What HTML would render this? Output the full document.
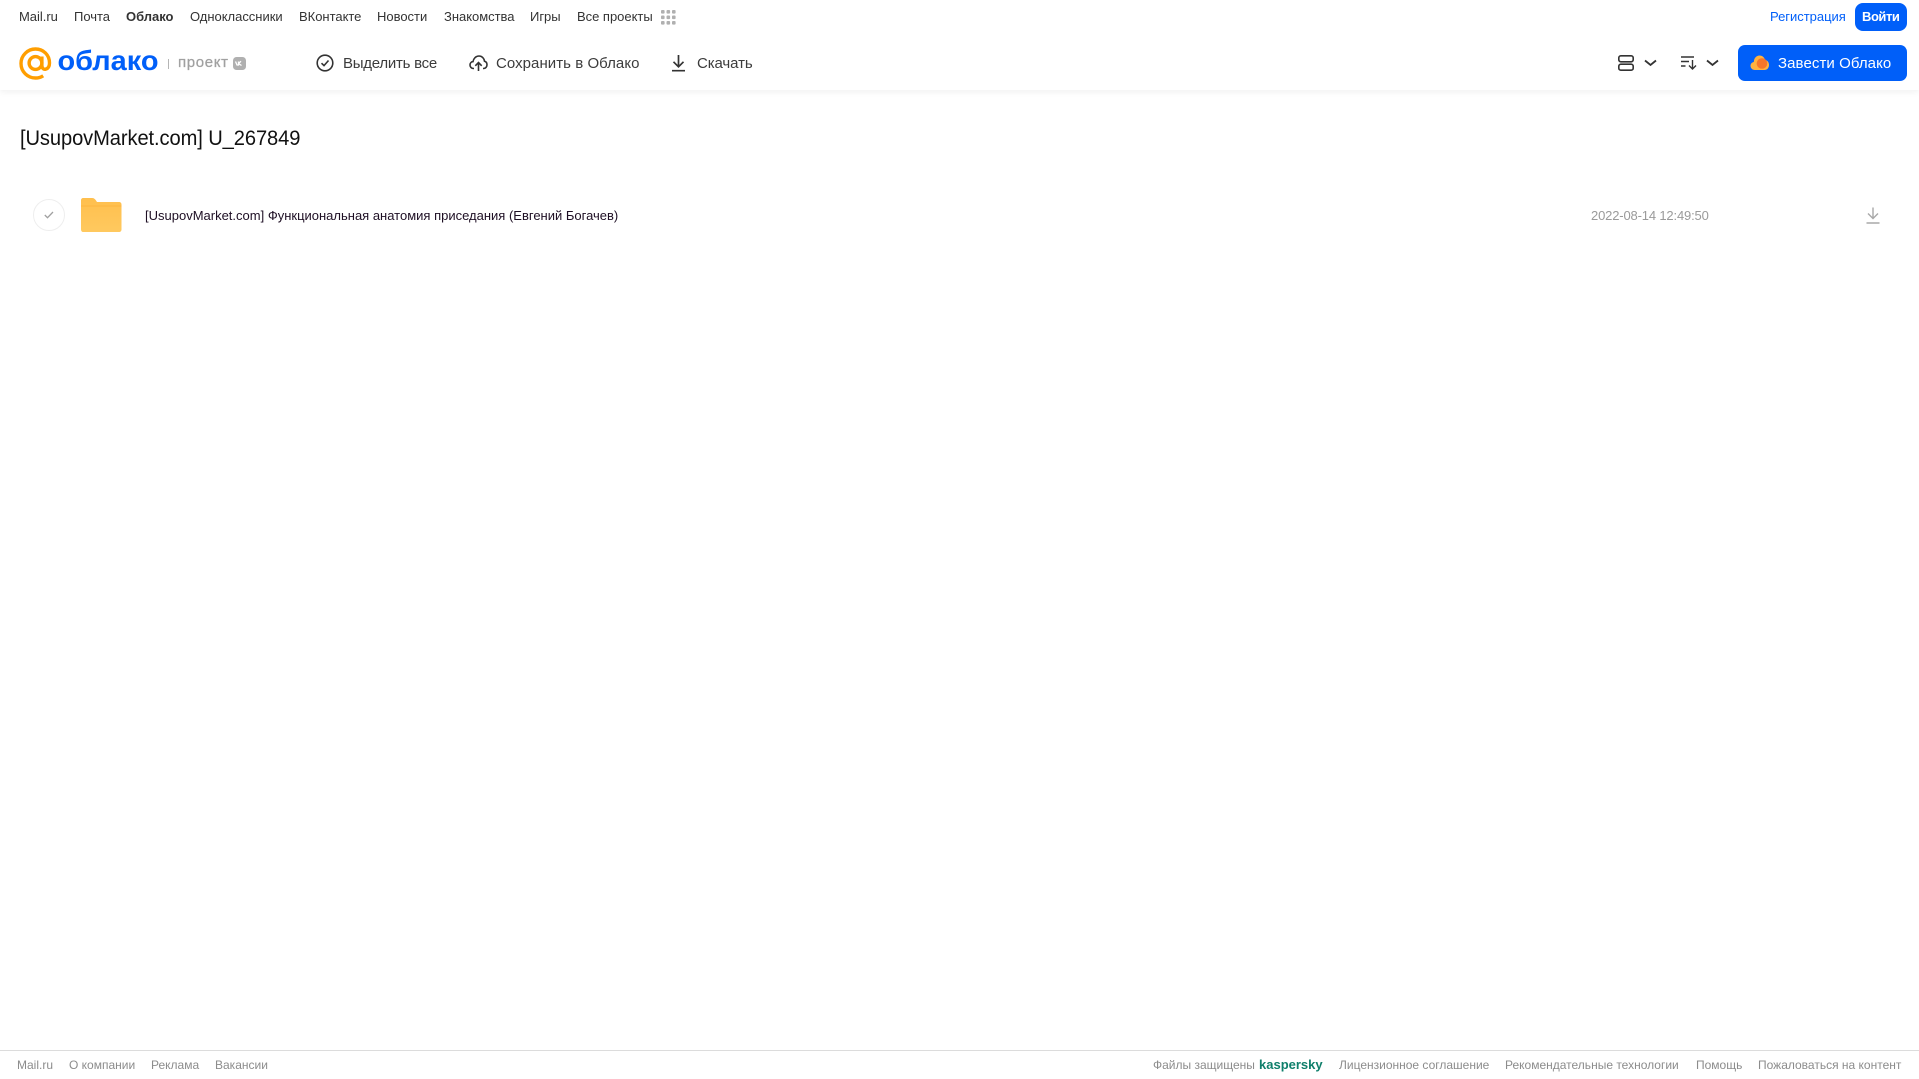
<!DOCTYPE html>
<html lang="ru"><head><meta charset="utf-8"><title>Облако</title>
<style>
html,body{margin:0;padding:0;background:#fff;width:1919px;height:1079px;overflow:hidden}
body{font-family:"Liberation Sans",sans-serif;position:relative}
.t{position:absolute;white-space:nowrap;line-height:20px}
.n{font-size:13px;color:#333;top:7px;letter-spacing:-.02px}
.a{font-size:15px;color:#3c3c3c;top:53.5px}
.f{font-size:12px;color:#8c8c8c;top:1055px}
svg{position:absolute;overflow:visible}
#hd{position:absolute;left:0;top:0;width:1919px;height:90px;background:#fff;box-shadow:0 2px 6px rgba(0,0,0,.06)}
</style></head><body>
<div id="hd"></div>
<span class="t n" style="left:19px">Mail.ru</span>
<span class="t n" style="left:74px">Почта</span>
<span class="t n" style="left:126px;font-weight:bold">Облако</span>
<span class="t n" style="left:190px">Одноклассники</span>
<span class="t n" style="left:299px">ВКонтакте</span>
<span class="t n" style="left:377px">Новости</span>
<span class="t n" style="left:444px">Знакомства</span>
<span class="t n" style="left:530px">Игры</span>
<span class="t n" style="left:577px">Все проекты</span>
<svg style="left:661px;top:10px" width="15" height="15" fill="#b0b0b0"><rect x="0" y="0" width="3.6" height="3.6" rx="1"/><rect x="5.5" y="0" width="3.6" height="3.6" rx="1"/><rect x="11" y="0" width="3.6" height="3.6" rx="1"/><rect x="0" y="5.5" width="3.6" height="3.6" rx="1"/><rect x="5.5" y="5.5" width="3.6" height="3.6" rx="1"/><rect x="11" y="5.5" width="3.6" height="3.6" rx="1"/><rect x="0" y="11" width="3.6" height="3.6" rx="1"/><rect x="5.5" y="11" width="3.6" height="3.6" rx="1"/><rect x="11" y="11" width="3.6" height="3.6" rx="1"/></svg>
<span class="t n" style="left:1770px;color:#005ff9">Регистрация</span>
<div style="position:absolute;left:1855px;top:3px;width:52px;height:28px;border-radius:8px;background:#005ff9"></div>
<span class="t n" style="left:1862px;color:#fff;font-weight:bold;letter-spacing:-.45px">Войти</span>

<svg style="left:19px;top:47px" width="33" height="33" viewBox="0 0 33 33" fill="none" stroke="#ff9e00" stroke-width="3.4"><circle cx="16.5" cy="16" r="6.4"/><path d="M22.900 9.500V18.500C22.900 21.600 25 22.600 26.600 22.200 29.400 21.500 30.500 19 30.500 16 30.500 7.800 24.300 2 16.500 2 8.800 2 2 8.300 2 16.500 2 24.700 8.500 31 16.500 31 19.500 31 22 30.200 24.200 28.800"/></svg>
<svg style="left:56px;top:42px" width="105" height="40"><text x="1.500" y="28" font-family="Liberation Sans" font-size="28" font-weight="bold" fill="#005ff9" textLength="101" lengthAdjust="spacingAndGlyphs">облако</text></svg>
<div style="position:absolute;left:168px;top:59px;width:1px;height:10px;background:#b5b5b5"></div>
<span class="t" style="left:178px;top:53px;font-size:15px;color:#a0a0a0;letter-spacing:.65px;-webkit-text-stroke:.25px #a0a0a0">проект</span>
<div style="position:absolute;left:233px;top:57px;width:13px;height:13px;border-radius:3.500px;background:#b0b0b0"></div>
<svg style="left:235px;top:60px" width="9" height="7" fill="none" stroke="#fff" stroke-width="1.300"><path d="M.5 1.500 2 5 3.500 5V1.500M3.500 3.500 6 1.300M3.500 3.500 6.500 5.500"/></svg>

<svg style="left:316px;top:54px" width="18" height="18" fill="none" stroke="#333" stroke-width="1.600"><circle cx="9" cy="9" r="7.800"/><path d="M5.500 9.200 8 11.600 12.500 6.500"/></svg>
<span class="t a" style="left:343px;letter-spacing:-.25px">Выделить все</span>
<svg style="left:469px;top:54px" width="19" height="18" fill="none" stroke="#333" stroke-width="1.600"><path d="M5 14.500H4.500C2.300 14.500 1 12.800 1 11 1 9.200 2.300 7.800 4 7.600 4.500 4.500 6.800 2 10 2 13 2 15.200 4.300 15.500 7.200 17 7.600 18 9 18 10.800 18 12.800 16.500 14.500 14.500 14.500H14M9.500 17V9M6.300 11.800 9.500 8.500 12.700 11.800"/></svg>
<span class="t a" style="left:496px;letter-spacing:.05px">Сохранить в Облако</span>
<svg style="left:671px;top:54px" width="15" height="18" fill="none" stroke="#333" stroke-width="1.700"><path d="M7.500 1V12.500M2.500 7.800 7.500 12.800 12.500 7.800M1 16.700H14"/></svg>
<span class="t a" style="left:697px;letter-spacing:-.1px">Скачать</span>

<svg style="left:1618px;top:55px" width="16" height="16" fill="none" stroke="#333" stroke-width="1.600"><rect x=".8" y=".8" width="14.400" height="6" rx="2"/><rect x=".8" y="9.200" width="14.400" height="6" rx="2"/></svg>
<svg style="left:1644px;top:59px" width="13" height="8" fill="none" stroke="#333" stroke-width="1.800"><path d="M1 1.500 6.500 6 12 1.500"/></svg>
<svg style="left:1681px;top:56px" width="16" height="14" fill="none" stroke="#333" stroke-width="1.400"><path d="M0 1H13M0 5.500H8M0 10H4.500M11.500 4V12.500M8 9.500 11.500 13 15 9.500"/></svg>
<svg style="left:1706px;top:59px" width="13" height="8" fill="none" stroke="#333" stroke-width="1.800"><path d="M1 1.500 6.500 6 12 1.500"/></svg>

<div style="position:absolute;left:1738px;top:45px;width:169px;height:36px;border-radius:7px;background:#005ff9"></div>
<svg style="left:1750px;top:54px" width="20" height="17"><path d="M5 16C2 16 .5 14 .5 11.800.5 9.800 2 8.300 3.800 8 4 4 6.500 1.500 9.500 1.500 12.500 1.500 14.500 3.500 15 6 17.500 6.300 19 8.300 19 11 19 14 17 16 14.500 16Z" fill="#ffb23f"/><circle cx="12" cy="9.500" r="5.300" fill="#f5762b"/></svg>
<span class="t a" style="left:1778px;color:#fff;letter-spacing:.08px">Завести Облако</span>

<span class="t" style="left:20px;top:127px;font-size:21px;line-height:24px;color:#111;letter-spacing:-.1px;transform:scaleX(.958);transform-origin:0 50%">[UsupovMarket.com] U_267849</span>

<div style="position:absolute;left:33px;top:199px;width:30px;height:30px;border:1px solid #eee;border-radius:50%"></div>
<svg style="left:44px;top:211px" width="10" height="8" fill="none" stroke="#a0a0a0" stroke-width="1.300"><path d="M.8 4 3.500 6.700 9 1"/></svg>
<svg style="left:81px;top:198px" width="41" height="34"><defs><linearGradient id="g" x1="0" y1="0" x2="0" y2="1"><stop offset="0" stop-color="#ffbf4d"/><stop offset="1" stop-color="#ffc95f"/></linearGradient></defs><path d="M2 0H11C13 0 14 1 15 2.500L16 4H38C39.500 4 40.500 5 40.500 6.500V31.500C40.500 33 39.500 34 38 34H2C1 34 0 33 0 31.500V2C0 1 1 0 2 0Z" fill="url(#g)"/><path d="M0 8H40.500" stroke="#fdb53f" stroke-width="1"/></svg>
<span class="t" style="left:145px;top:205.500px;font-size:13px;color:#1e0f24">[UsupovMarket.com] Функциональная анатомия приседания (Евгений Богачев)</span>
<span class="t" style="left:1591px;top:205.500px;font-size:13px;color:#9a9a9a;letter-spacing:-.16px">2022-08-14 12:49:50</span>
<svg style="left:1866px;top:207px" width="14" height="17" fill="none" stroke="#a8a8a8" stroke-width="1.400"><path d="M7 .5V11M2 6.500 7 11.500 12 6.500M.5 16H13.500"/></svg>

<div style="position:absolute;left:0;top:1050px;width:1919px;height:1px;background:#dcdcdc"></div>
<span class="t f" style="left:17px">Mail.ru</span>
<span class="t f" style="left:69px">О компании</span>
<span class="t f" style="left:151px">Реклама</span>
<span class="t f" style="left:215px">Вакансии</span>
<span class="t f" style="left:1153px">Файлы защищены</span>
<span class="t f" style="left:1259px;font-size:13px;font-weight:bold;color:#0f7f6b">kaspersky</span>
<span class="t f" style="left:1339px">Лицензионное соглашение</span>
<span class="t f" style="left:1505px">Рекомендательные технологии</span>
<span class="t f" style="left:1696px">Помощь</span>
<span class="t f" style="left:1758px">Пожаловаться на контент</span>
</body></html>
